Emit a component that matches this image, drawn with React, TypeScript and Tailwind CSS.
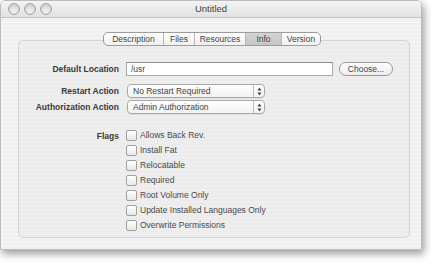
import React from 'react';

const tabs = [
  { label: 'Description', w: 'w-[59px]' },
  { label: 'Files', w: 'w-[31px]' },
  { label: 'Resources', w: 'w-[51px]' },
  { label: 'Info', w: 'w-[36px]', active: true },
  { label: 'Version', w: 'w-[39px]' },
];

const flags = [
  'Allows Back Rev.',
  'Install Fat',
  'Relocatable',
  'Required',
  'Root Volume Only',
  'Update Installed Languages Only',
  'Overwrite Permissions',
];

const Light = () => (
  <div className="w-[12px] h-[12px] rounded-full border border-[#a6a6a6] bg-[radial-gradient(circle_at_50%_70%,#f6f6f6_0%,#dadada_55%,#bdbdbd_100%)]" />
);

const Arrows = () => (
  <svg width="5" height="9" viewBox="0 0 5 9">
    <path d="M2.5 0.5 L4.5 3.5 L0.5 3.5 Z" fill="#444" />
    <path d="M2.5 8.5 L4.5 5.5 L0.5 5.5 Z" fill="#444" />
  </svg>
);

const Popup = ({ value }: { value: string }) => (
  <div className="flex h-[14px] w-[138px] items-stretch rounded-[4px] border border-[#a8a8a8] bg-gradient-to-b from-white to-[#f2f2f2] shadow-[0_1px_0_rgba(0,0,0,0.06)]">
    <span className="flex-1 pl-[5px] text-[8.5px] leading-[12px] text-[#444]">{value}</span>
    <span className="flex w-[11px] items-center justify-center border-l border-[#c0c0c0]">
      <Arrows />
    </span>
  </div>
);

export default function App() {
  return (
    <div className="w-[431px] h-[264px] bg-white font-['Liberation_Sans',Arial,sans-serif] text-[#3a3a3a]">
      <div className="flex h-[250px] w-[422px] flex-col overflow-hidden rounded-t-[5px] border border-[#bdbdbd] shadow-[2px_4px_8px_rgba(0,0,0,0.4)]">
        {/* title bar */}
        <div className="relative flex h-[17px] items-center border-b border-[#c2c2c2] bg-gradient-to-b from-[#f4f4f4] to-[#e2e2e2]">
          <div className="flex gap-[4px] pl-[7px]">
            <Light />
            <Light />
            <Light />
          </div>
          <span className="absolute inset-x-0 text-center text-[9.5px] text-[#444]">Untitled</span>
        </div>

        {/* body */}
        <div className="flex flex-1 flex-col bg-[repeating-linear-gradient(0deg,#f0f0f0_0px,#f0f0f0_2px,#f4f4f4_2px,#f4f4f4_4px)] px-[17px] pt-[14px]">
          <div className="relative z-10 flex justify-center pl-[2px]">
            <div className="flex h-[14px] overflow-hidden rounded-[5px] border border-[#9c9c9c] bg-gradient-to-b from-white to-[#f0f0f0]">
              {tabs.map((t, i) => (
                <div
                  key={t.label}
                  className={`${t.w} flex items-center justify-center text-[8.5px] leading-none text-[#444] ${i > 0 ? 'border-l border-[#b8b8b8]' : ''} ${t.active ? 'bg-gradient-to-b from-[#d4d4d4] to-[#c6c6c6]' : ''}`}
                >
                  {t.label}
                </div>
              ))}
            </div>
          </div>

          <div className="-mt-[6px] flex h-[198px] w-[392px] flex-col rounded-[5px] border border-[#d4d4d4] bg-[#e8e8e8]/50 pt-[21px]">
            <div className="flex h-[14px] items-center">
              <span className="w-[100px] text-right text-[8.5px] font-bold">Default Location</span>
              <div className="ml-[7px] flex h-[14px] w-[207px] items-center border border-[#a8a8a8] border-t-[#8a8a8a] bg-white pl-[4px] text-[8.5px] text-[#444]">
                /usr
              </div>
              <div className="ml-[6px] flex h-[14px] w-[54px] items-center justify-center rounded-full border border-[#999999] bg-gradient-to-b from-white to-[#eeeeee] text-[8.5px] text-[#444]">
                Choose...
              </div>
            </div>

            <div className="mt-[8px] flex h-[14px] items-center">
              <span className="w-[100px] text-right text-[8.5px] font-bold">Restart Action</span>
              <div className="ml-[8px]">
                <Popup value="No Restart Required" />
              </div>
            </div>

            <div className="mt-[2px] flex h-[14px] items-center">
              <span className="w-[100px] text-right text-[8.5px] font-bold">Authorization Action</span>
              <div className="ml-[8px]">
                <Popup value="Admin Authorization" />
              </div>
            </div>

            <div className="mt-[14px] flex">
              <span className="w-[100px] pt-[2px] text-right text-[8.5px] font-bold">Flags</span>
              <div className="ml-[7px] flex flex-col">
                {flags.map((f) => (
                  <div key={f} className="flex h-[15px] items-center gap-[3px]">
                    <span className="h-[11px] w-[11px] rounded-[2px] border border-[#a0a0a0] bg-gradient-to-b from-white to-[#e8e8e8]" />
                    <span className="text-[8.5px] text-[#4a4a4a]">{f}</span>
                  </div>
                ))}
              </div>
            </div>
          </div>
        </div>
      </div>
    </div>
  );
}
